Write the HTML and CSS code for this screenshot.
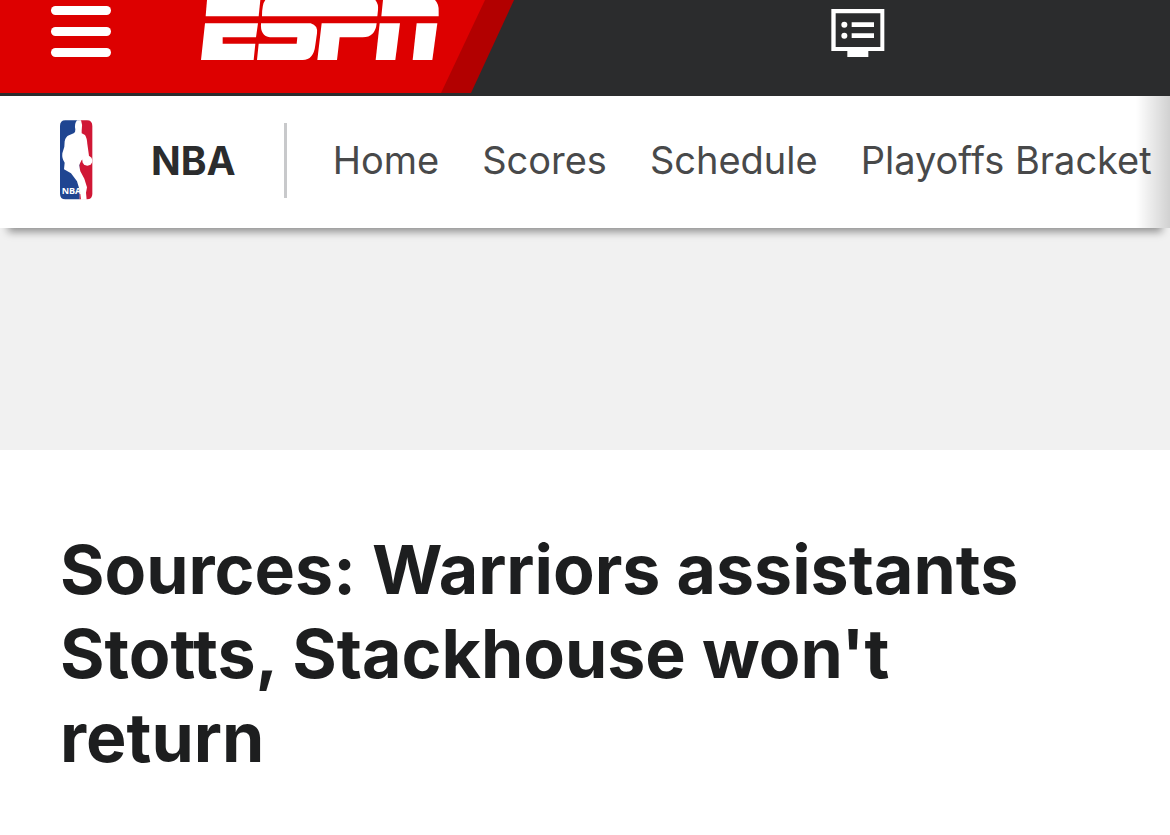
FILE: index.html
```html
<!DOCTYPE html>
<html lang="en">
<head>
  <meta charset="UTF-8">
  <title>Sources: Warriors assistants Stotts, Stackhouse won't return</title>
  <meta name="viewport" content="width=device-width, initial-scale=1.0">
  <link rel="stylesheet" href="styles.css">
</head>
<body>
  <header class="header">
    <div class="brand">
      <div class="brand-main">
        <button class="menu" type="button" aria-label="Menu">
          <span></span>
          <span></span>
          <span></span>
        </button>
        <a class="logo" href="#" aria-label="ESPN">
          <svg viewBox="33 0 714 180" width="238" height="60" fill="#fff">
            <path d="M51 0H211L206 49H47Z"/>
            <path d="M226 0H556Q566 12 564 30L562 49H216Q216 12 226 0Z"/>
            <path d="M579 0H735Q747 12 746 34V49H574Z"/>
            <path d="M45 70H204L198 112H98V131H196L191 180H33Z"/>
            <path d="M213 70H362Q384 76 381 100L376 135Q371 180 338 180H201L206 131H320L322 112H240Q210 108 213 70Z"/>
            <path d="M395 70H560Q556 112 518 112H449L441 180H382Z"/>
            <path d="M569 70H630L616 180H557Z"/>
            <path d="M680 70H742L727 180H668Z"/>
          </svg>
        </a>
      </div>
    </div>
    <a class="watch" href="#" aria-label="Watch">
      <svg viewBox="62 27 162 144" width="54" height="48" fill="#fff">
        <path fill-rule="evenodd" d="M63 27H222V153H174V171H111V153H63ZM76 40V141H210V40Z"/>
        <circle cx="102" cy="74" r="9"/>
        <circle cx="102" cy="107" r="9"/>
        <path d="M124 67H191V81H124ZM124 100H191V114H124Z"/>
      </svg>
    </a>
  </header>

  <nav class="subnav">
    <a class="league" href="#">
      <svg class="league-logo" viewBox="12 12 102 240" width="34" height="80" aria-hidden="true">
        <path d="M31 13H74V250H31Q15 250 15 233V30Q15 13 31 13Z" fill="#1f4591"/>
        <path d="M74 13H96Q112 13 112 30V233Q112 250 96 250H74Z" fill="#d01735"/>
        <path d="M66 13H78Q84 28 80 44L80 52L90 57Q96 66 97 84L102 119L94 128L80 132L72 148L76 166L88 188L96 214L93 230L95 251H78L75 226L66 196L48 172L27 160L29 140Q20 128 22 112L28 92L29 76Q32 62 42 58L56 52Q62 48 61 40Q57 24 66 13Z" fill="#fff"/>
        <circle cx="97" cy="134" r="15" fill="#fff"/>
        <text class="league-mark" x="20" y="234" fill="#fff">NBA</text>
      </svg>
      <span class="league-name">NBA</span>
    </a>
    <div class="links">
      <a href="#">Home</a>
      <a href="#">Scores</a>
      <a href="#">Schedule</a>
      <a href="#">Playoffs Bracket</a>
    </div>
  </nav>

  <div class="ad-slot"></div>

  <main class="article">
    <h1>Sources: Warriors assistants Stotts, Stackhouse won't return</h1>
  </main>
</body>
</html>
```

FILE: styles.css
```css
* {
  box-sizing: border-box;
}
body {
  margin: 0;
  font-family: Inter, "Liberation Sans", sans-serif;
  background: #fff;
  color: #1d1e1f;
}
a {
  color: inherit;
  text-decoration: none;
}
svg {
  display: block;
}
.header {
  display: flex;
  align-items: flex-start;
  height: 96px;
  background: #2b2c2d;
}
.brand {
  width: 514px;
  height: 93px;
  background: #b20000;
  clip-path: polygon(0 0, 100% 0, 471px 100%, 0 100%);
}
.brand-main {
  display: flex;
  align-items: flex-start;
  width: 485px;
  height: 100%;
  padding-left: 51px;
  background: #dd0000;
  clip-path: polygon(0 0, 100% 0, 441px 100%, 0 100%);
}
.menu {
  display: flex;
  flex-direction: column;
  gap: 12px;
  width: 60px;
  margin: 0 90px 0 0;
  padding: 6px 0;
  border: 0;
  background: none;
  cursor: pointer;
}
.menu span {
  width: 60px;
  height: 9px;
  border-radius: 5px;
  background: #fff;
}
.watch {
  margin-left: auto;
  margin-right: 285px;
  padding-top: 9px;
}
.subnav {
  position: relative;
  display: flex;
  align-items: center;
  height: 132px;
  padding: 0 0 4px 59px;
  background: #fff;
  box-shadow: 0 12px 8px -8px rgba(0, 0, 0, 0.4);
}
.subnav::after {
  content: "";
  position: absolute;
  top: 0;
  right: 0;
  bottom: 0;
  width: 34px;
  background: linear-gradient(to right, rgba(0, 0, 0, 0), rgba(0, 0, 0, 0.18));
  pointer-events: none;
}
.league {
  display: flex;
  align-items: center;
  gap: 58px;
  height: 75px;
  padding-right: 48px;
  border-right: 3px solid #c8c9cb;
}
.league-logo {
  flex: none;
}
.league-mark {
  font-family: "Open Sans", sans-serif;
  font-size: 27px;
  font-weight: 700;
}
.league-name {
  font-size: 39px;
  font-weight: 700;
  color: #2b2c2d;
}
.links {
  display: flex;
  gap: 43px;
  padding-left: 46px;
  font-size: 38px;
  color: #48494a;
  white-space: nowrap;
}
.ad-slot {
  height: 222px;
  background: #f1f1f1;
}
.article {
  padding: 77px 90px 77px 60px;
}
h1 {
  margin: 0;
  font-size: 68px;
  font-weight: 700;
  line-height: 84px;
}
```
